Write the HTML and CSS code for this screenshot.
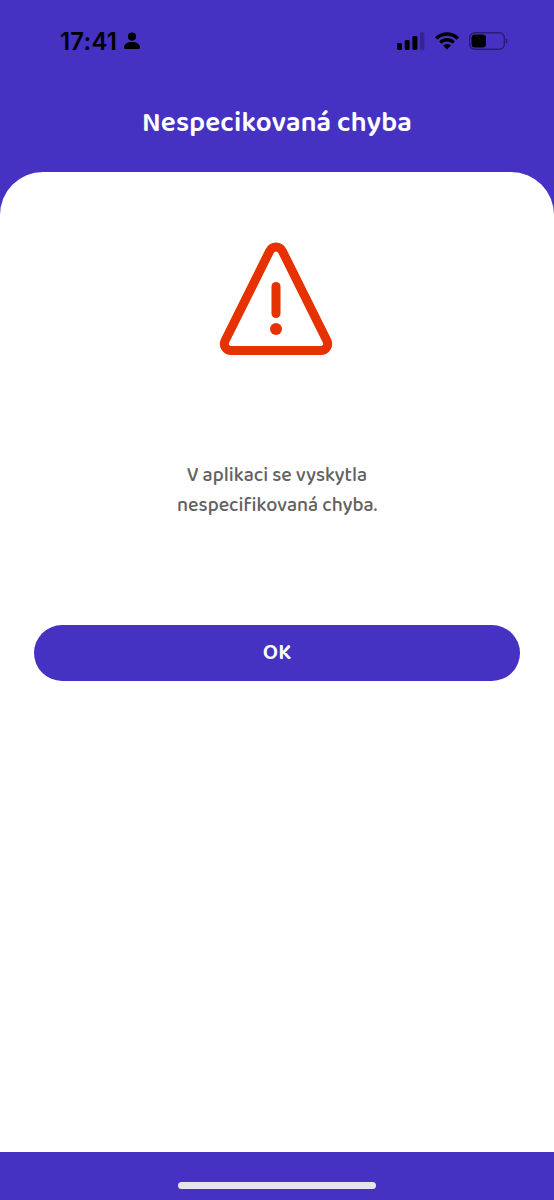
FILE: index.html
```html
<!DOCTYPE html>
<html lang="cs">
<head>
<meta charset="utf-8">
<title>Nespecikovaná chyba</title>
<link rel="stylesheet" href="styles.css">
</head>
<body>
<div class="screen">
  <div class="status-bar">
    <div class="status-left">
      <span class="time">17:41</span>
      <svg class="person" width="16" height="18" viewBox="0 0 16 18"><circle cx="8" cy="4.6" r="4.1"/><path d="M0 15.5C0 12 3.4 10 8 10s8 2 8 5.500c0 1-.6 1.500-1.600 1.500H1.600C.6 17 0 16.500 0 15.500z"/></svg>
    </div>
    <div class="status-right">
      <svg width="28" height="20" viewBox="0 0 28 20"><rect x="0" y="12" width="5" height="7" rx="1.400"/><rect x="7.700" y="9" width="5" height="10" rx="1.400"/><rect x="15.400" y="5" width="5" height="14" rx="1.400"/><rect x="23" y="1.500" width="4.500" height="17.500" rx="1.400" opacity=".25"/></svg>
      <svg width="24" height="18" viewBox="0 0 24 18"><path d="M0 5.300C6.500-1.400 17.500-1.400 24 5.300L21.600 7.700C16.300 2.400 7.700 2.400 2.400 7.700z"/><path d="M4.100 9.400C8.600 5 15.400 5 19.900 9.400L17.500 11.800C14.300 8.800 9.700 8.800 6.500 11.800z"/><path d="M8.100 13.400C10.400 11.400 13.600 11.400 15.900 13.400L12 17.400z"/></svg>
      <svg width="39" height="18" viewBox="0 0 39 18"><rect x=".7" y=".7" width="34.600" height="16.600" rx="5" fill="none" stroke="#000" stroke-opacity=".42" stroke-width="1.400"/><rect x="2.500" y="2.500" width="14.500" height="13" rx="3.500"/><path d="M36.700 6.200Q38.500 7 38.500 9T36.700 11.800z" opacity=".42"/></svg>
    </div>
  </div>
  <header class="header"><h1 class="title">Nespecikovaná chyba</h1></header>
  <main class="card">
    <svg class="warning" width="114" height="114" viewBox="0 0 114 114"><path class="outline" d="M50.600 9.200L6.200 98.500C3.700 103.500 7 108.500 12.300 108.500H101.700C107 108.500 110.300 103.500 107.800 98.500L63.400 9.200C60.600 3.600 53.400 3.600 50.600 9.200z"/><path class="mark" d="M57 44.500V71.500"/><circle class="dot" cx="57" cy="87" r="6"/></svg>
    <p class="message"><span class="line first">V aplikaci se vyskytla</span><span class="line">nespecifikovaná chyba.</span></p>
    <button class="ok" type="button">OK</button>
  </main>
  <footer class="footer"><div class="home"></div></footer>
</div>
</body>
</html>
```
FILE: styles.css
```css
* { box-sizing: border-box; }
body { margin: 0; }
.screen {
  width: 554px;
  height: 1200px;
  display: flex;
  flex-direction: column;
  background: #4532c3;
  font-family: "Baloo 2", "Open Sans", "Noto Sans", sans-serif;
}
.status-bar {
  height: 82px;
  padding: 0 46px 0 60px;
  display: flex;
  align-items: center;
  justify-content: space-between;
  color: #000;
}
.status-left { display: flex; align-items: center; gap: 6px; }
.time {
  width: 58px;
  padding-top: 1px;
  font: 600 24px/28px Inter, sans-serif;
  letter-spacing: 0.2px;
  white-space: nowrap;
}
.status-right { display: flex; align-items: center; gap: 10px; }
.header {
  height: 90px;
  display: flex;
  justify-content: center;
}
.title {
  margin: 24px 0 0;
  font-size: 28px;
  font-weight: 600;
  line-height: 36px;
  letter-spacing: 0.15px;
  color: #fff;
  white-space: nowrap;
}
.card {
  height: 980px;
  padding: 70px 34px 0;
  display: flex;
  flex-direction: column;
  align-items: center;
  border-radius: 43px 43px 0 0;
  background: #fff;
}
.warning { flex: none; margin-right: 2px; }
.outline { fill: none; stroke: #e63200; stroke-width: 9; stroke-linejoin: round; }
.mark { fill: none; stroke: #e63200; stroke-width: 9; stroke-linecap: round; }
.dot { fill: #e63200; }
.message {
  margin: 105px 0 0;
  font-size: 19.8px;
  font-weight: 500;
  line-height: 30px;
  color: #626262;
  text-align: center;
}
.line { display: block; white-space: nowrap; }
.ok {
  width: 100%;
  height: 56px;
  margin: 103.500px 0 0;
  padding: 0;
  border: 0;
  border-radius: 28px;
  background: #4532c3;
  color: #fff;
  font: 600 22px/56px "Baloo 2", "Open Sans", sans-serif;
}
.footer {
  height: 48px;
  padding-top: 29.500px;
  display: flex;
  justify-content: center;
}
.home { width: 198px; height: 7px; border-radius: 4px; background: #e6e5e9; }
```
